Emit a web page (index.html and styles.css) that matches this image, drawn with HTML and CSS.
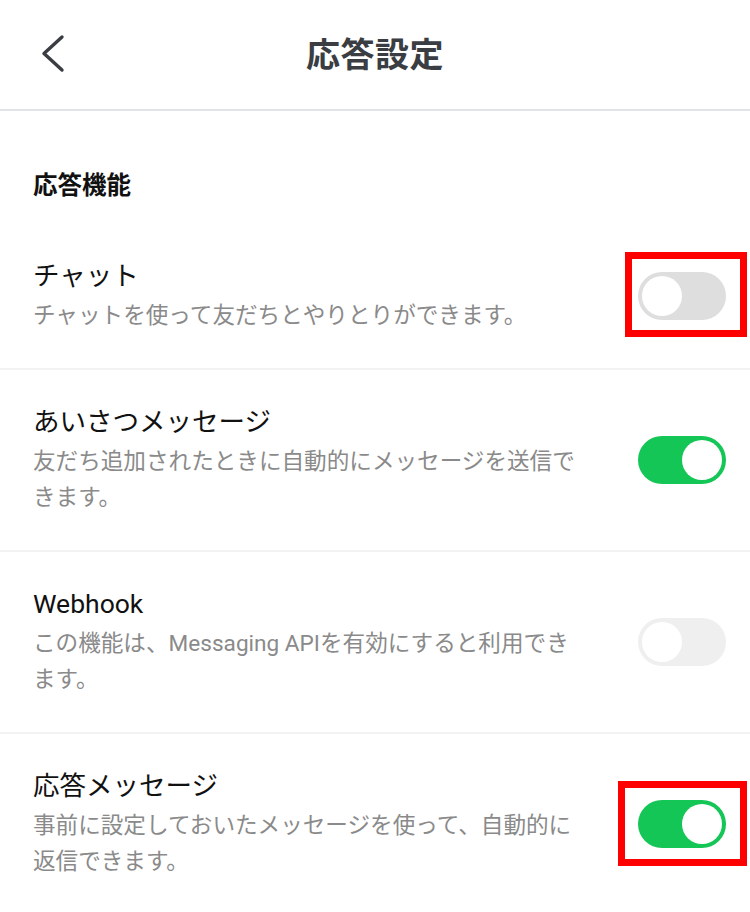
FILE: index.html
```html
<!DOCTYPE html>
<html lang="ja">
<head>
<meta charset="utf-8">
<title>応答設定</title>
<link rel="stylesheet" href="styles.css">
</head>
<body>
<header class="topbar">
  <div class="topbar-left">
    <button class="back" aria-label="戻る">
      <svg width="24" height="40" viewBox="0 0 24 40" aria-hidden="true">
        <polyline points="21,3 3,19.5 21,36" fill="none" stroke="#3a3d42" stroke-width="3.4" stroke-linecap="round" stroke-linejoin="round"/>
      </svg>
    </button>
  </div>
  <h1 class="topbar-title">応答設定</h1>
  <div class="topbar-right"></div>
</header>

<main class="content">
  <h2 class="section-title">応答機能</h2>

  <ul class="settings">
    <li class="setting">
      <div class="setting-text">
        <div class="setting-name">チャット</div>
        <p class="setting-desc">チャットを使って友だちとやりとりができます。</p>
      </div>
      <div class="toggle-wrap">
        <span class="toggle off"><span class="knob"></span></span>
        <span class="mark mark-a"></span>
      </div>
    </li>
    <li class="setting">
      <div class="setting-text">
        <div class="setting-name">あいさつメッセージ</div>
        <p class="setting-desc">友だち追加されたときに自動的にメッセージを送信できます。</p>
      </div>
      <div class="toggle-wrap">
        <span class="toggle on"><span class="knob"></span></span>
      </div>
    </li>
    <li class="setting">
      <div class="setting-text">
        <div class="setting-name">Webhook</div>
        <p class="setting-desc">この機能は、Messaging APIを有効にすると利用できます。</p>
      </div>
      <div class="toggle-wrap">
        <span class="toggle disabled"><span class="knob"></span></span>
      </div>
    </li>
    <li class="setting">
      <div class="setting-text">
        <div class="setting-name">応答メッセージ</div>
        <p class="setting-desc">事前に設定しておいたメッセージを使って、自動的に返信できます。</p>
      </div>
      <div class="toggle-wrap">
        <span class="toggle on"><span class="knob"></span></span>
        <span class="mark mark-b"></span>
      </div>
    </li>
  </ul>
</main>
</body>
</html>
```

FILE: styles.css
```css
* {
  box-sizing: border-box;
}

html, body {
  margin: 0;
  padding: 0;
  background: #ffffff;
}

body {
  font-family: Roboto, "Noto Sans CJK JP", "Noto Sans", sans-serif;
  color: #111111;
  width: 750px;
  overflow: hidden;
}

.topbar {
  height: 111px;
  border-bottom: 2px solid #e1e3e8;
  display: grid;
  grid-template-columns: 1fr auto 1fr;
  align-items: center;
}

.topbar-left {
  padding-left: 41px;
  display: flex;
  align-items: center;
}

.back {
  border: 0;
  background: none;
  padding: 0;
  margin: 0;
  display: flex;
  cursor: pointer;
  margin-top: -2px;
}

.topbar-title {
  margin: 0;
  font-size: 34px;
  line-height: 40px;
  font-weight: 700;
  color: #3a3d42;
  letter-spacing: 0.5px;
}

.content {
  padding-top: 57px;
}

.section-title {
  margin: 0 0 20px;
  padding-left: 33px;
  font-size: 24.5px;
  line-height: 36px;
  font-weight: 700;
  color: #111111;
}

.settings {
  list-style: none;
  margin: 0;
  padding: 0;
}

.setting {
  display: flex;
  align-items: center;
  gap: 60px;
  padding: 34px 24px 34px 33px;
  border-bottom: 2px solid #f2f2f2;
}

.setting:last-child {
  border-bottom: 0;
}

.setting-text {
  flex: 1;
  min-width: 0;
}

.setting-name {
  font-size: 26.5px;
  line-height: 36px;
  color: #111111;
}

.setting-desc {
  margin: 4px 0 0;
  font-size: 22.6px;
  line-height: 36px;
  color: #8a8a8a;
}

.toggle-wrap {
  position: relative;
  flex: none;
  width: 88px;
  height: 48px;
}

.toggle {
  display: flex;
  align-items: center;
  width: 88px;
  height: 48px;
  border-radius: 24px;
  padding: 4px;
}

.toggle .knob {
  width: 40px;
  height: 40px;
  border-radius: 50%;
  background: #ffffff;
}

.toggle.off {
  background: #dedede;
}

.toggle.disabled {
  background: #efefef;
}

.toggle.on {
  background: #13c656;
  justify-content: flex-end;
}

.mark {
  position: absolute;
  border: 7px solid #ff0000;
  pointer-events: none;
}

.mark-a {
  left: -13px;
  right: -21px;
  top: -20px;
  bottom: -17px;
}

.mark-b {
  left: -20px;
  right: -21px;
  top: -19px;
  bottom: -18px;
}
```
